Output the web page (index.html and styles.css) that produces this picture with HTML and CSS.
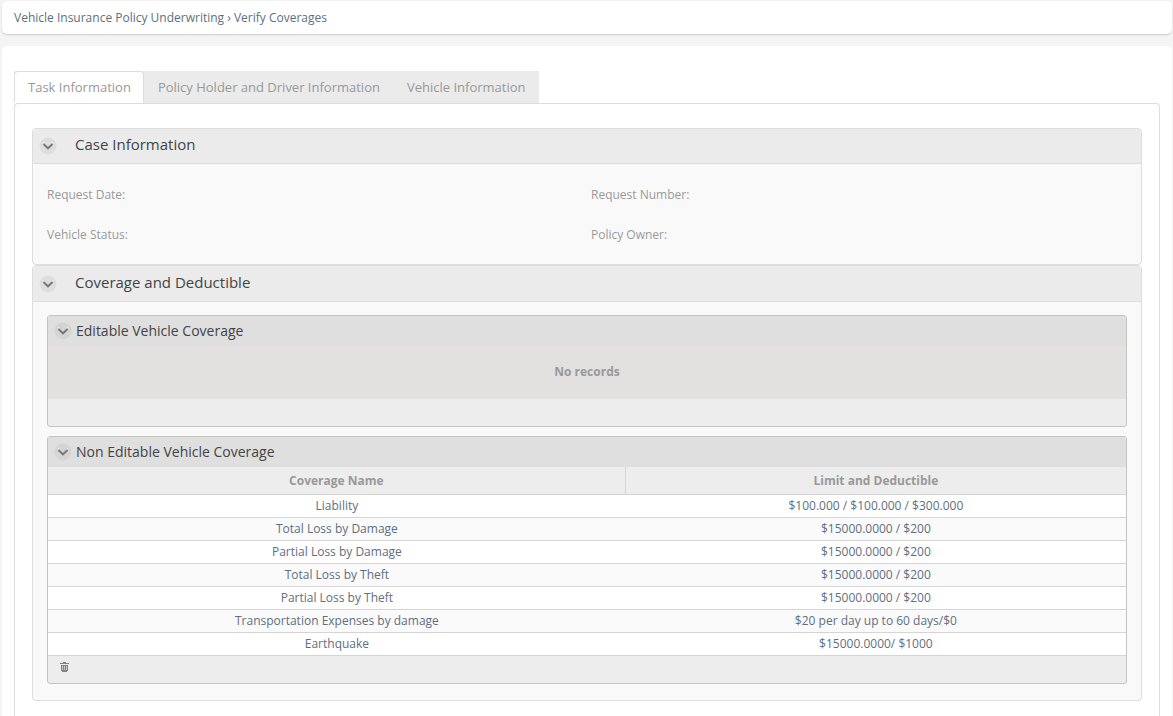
FILE: index.html
```html
<!DOCTYPE html>
<html lang="en">
<head>
<meta charset="utf-8">
<title>Verify Coverages</title>
<link rel="stylesheet" href="styles.css">
</head>
<body>
<svg class="sprite" aria-hidden="true">
  <symbol id="chevron" viewBox="0 0 18 18">
    <circle cx="9" cy="9" r="8.5" fill="currentColor"/>
    <path d="M4 7l5 5 5-5" fill="none" stroke="#f2f2f2" stroke-width="1" transform="translate(0 -2)"/>
    <path d="M4.500 7L9 11.300 13.500 7" fill="none" stroke="#777" stroke-width="2"/>
  </symbol>
</svg>
<nav class="breadcrumb" aria-label="Breadcrumb">Vehicle Insurance Policy Underwriting › Verify Coverages</nav>
<main class="page">
  <div class="tabs" role="tablist">
    <button class="tab tab-active" role="tab" aria-selected="true">Task Information</button>
    <button class="tab" role="tab" aria-selected="false">Policy Holder and Driver Information</button>
    <button class="tab" role="tab" aria-selected="false">Vehicle Information</button>
  </div>
  <div class="panel" role="tabpanel">
    <section class="group">
      <header class="group-head">
        <button class="toggle" aria-label="Collapse Case Information"><svg><use href="#chevron"/></svg></button>
        <h2 class="group-title">Case Information</h2>
      </header>
      <div class="fields">
        <span>Request Date:</span><span>Request Number:</span>
        <span>Vehicle Status:</span><span>Policy Owner:</span>
      </div>
    </section>
    <section class="group">
      <header class="group-head">
        <button class="toggle" aria-label="Collapse Coverage and Deductible"><svg><use href="#chevron"/></svg></button>
        <h2 class="group-title">Coverage and Deductible</h2>
      </header>
      <div class="group-body">
        <section class="grid">
          <header class="grid-head">
            <button class="toggle" aria-label="Collapse Editable Vehicle Coverage"><svg><use href="#chevron"/></svg></button>
            <h3 class="grid-title">Editable Vehicle Coverage</h3>
          </header>
          <p class="empty">No records</p>
          <footer class="grid-foot"></footer>
        </section>
        <section class="grid">
          <header class="grid-head">
            <button class="toggle" aria-label="Collapse Non Editable Vehicle Coverage"><svg><use href="#chevron"/></svg></button>
            <h3 class="grid-title">Non Editable Vehicle Coverage</h3>
          </header>
          <table class="coverages">
            <thead><tr><th class="name-column">Coverage Name</th><th>Limit and Deductible</th></tr></thead>
            <tbody>
              <tr><td>Liability</td><td>$100.000 / $100.000 / $300.000</td></tr>
              <tr><td>Total Loss by Damage</td><td>$15000.0000 / $200</td></tr>
              <tr><td>Partial Loss by Damage</td><td>$15000.0000 / $200</td></tr>
              <tr><td>Total Loss by Theft</td><td>$15000.0000 / $200</td></tr>
              <tr><td>Partial Loss by Theft</td><td>$15000.0000 / $200</td></tr>
              <tr><td>Transportation Expenses by damage</td><td>$20 per day up to 60 days/$0</td></tr>
              <tr><td>Earthquake</td><td>$15000.0000/ $1000</td></tr>
            </tbody>
          </table>
          <footer class="grid-foot">
            <button class="delete" aria-label="Delete"><svg viewBox="0 0 9 10"><path d="M3 0h3v1h3v1H0V1h3zM1 3h7v6H7v1H2V9H1z" fill="#858585" shape-rendering="crispEdges"/><path d="M2 4h1v4H2zM4 4h1v4H4zM6 4h1v4H6z" fill="#c4c4c4" shape-rendering="crispEdges"/></svg></button>
          </footer>
        </section>
      </div>
    </section>
  </div>
</main>
</body>
</html>
```
FILE: styles.css
```css
* { box-sizing: border-box; }

body {
  display: flex;
  flex-direction: column;
  min-height: 100vh;
  margin: 0;
  padding: 1px 1px 0 2px;
  background: #f4f4f4;
  color: #999;
  font: 12px/16px "Open Sans", sans-serif;
}

h2, h3, p { margin: 0; font-weight: 400; }

button {
  margin: 0;
  padding: 0;
  border: 0;
  background: none;
  color: inherit;
  font: inherit;
}

.sprite { position: absolute; width: 0; height: 0; }

.breadcrumb {
  padding: 9px 12px 8px;
  border-radius: 5px;
  background: #fff;
  box-shadow: 0 1px 2px #ccc;
  color: #5e6f80;
}

.page {
  display: flex;
  flex: 1;
  flex-direction: column;
  margin-top: 12px;
  padding: 25px 12px 0;
  border-radius: 5px 5px 0 0;
  background: #fff;
}

.tabs {
  display: flex;
  align-self: flex-start;
  background: #ebebeb;
}

.tab {
  height: 32px;
  padding: 0 13px 0 14px;
  font-size: 13px;
}

.tab-active {
  padding: 0 12px 0 13px;
  border: 1px solid #ddd;
  border-bottom-color: #fff;
  border-radius: 4px 4px 0 0;
  background: #fff;
}

.panel {
  flex: 1;
  padding: 24px 17px 15px;
  border: 1px solid #ddd;
  border-bottom: 0;
  border-radius: 4px 4px 0 0;
}

.group {
  border: 1px solid #ddd;
  border-radius: 4px;
  background: #f9f9f9;
}

.group-head {
  display: flex;
  align-items: center;
  gap: 18px;
  height: 35px;
  padding-left: 6px;
  border-bottom: 1px solid #ddd;
  border-radius: 3px 3px 0 0;
  background: #ebebeb;
}

.group + .group .group-head { height: 36px; }

.group-title {
  padding-bottom: 4px;
  color: #444;
  font-size: 15px;
  line-height: 20px;
}

.toggle, .toggle svg {
  display: block;
  width: 18px;
  height: 18px;
  color: #dedede;
}

.fields {
  display: grid;
  grid-template-columns: 1fr 1fr;
  gap: 24px 8px;
  padding: 23px 14px 21px;
}

.group-body {
  display: grid;
  gap: 9px;
  padding: 13px 14px 16px;
}

.grid {
  border: 1px solid #c4c4c1;
  border-radius: 3px;
  background: #ededed;
}

.grid-head {
  display: flex;
  align-items: center;
  gap: 4px;
  height: 30px;
  padding-left: 6px;
  background: #dfdfdf;
}

.grid-head .toggle svg { color: #d4d4d4; }

.grid-title {
  color: #444;
  font-size: 14px;
  line-height: 20px;
}

.empty {
  padding: 18px 0 19px;
  background: #e2e1e0;
  font-weight: 700;
  text-align: center;
}

.grid-foot { height: 27px; }

.coverages {
  width: 100%;
  border-collapse: separate;
  border-spacing: 0;
  table-layout: fixed;
  color: #5e6f80;
  text-align: center;
}

.coverages th {
  height: 28px;
  padding: 0;
  border-bottom: 1px solid #d5d5d5;
  color: #999;
}

.coverages .name-column {
  width: 53.6%;
  border-right: 1px solid #d5d5d5;
}

.coverages td {
  height: 23px;
  padding: 0;
  border-bottom: 1px solid #d5d5d5;
}

.coverages tr:nth-child(odd) td { background: #fff; }
.coverages tr:nth-child(even) td { background: #fafafa; }

.delete { display: block; padding: 6px 12px; }
.delete svg { display: block; width: 9px; height: 10px; }
```
